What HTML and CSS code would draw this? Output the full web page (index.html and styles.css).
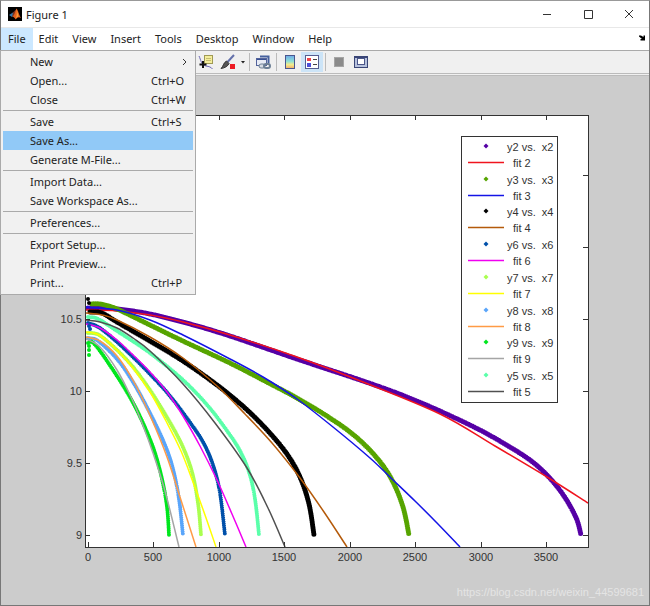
FILE: index.html
```html
<!DOCTYPE html>
<html lang="en">
<head>
<meta charset="utf-8">
<title>Figure 1</title>
<link rel="stylesheet" href="styles.css">
</head>
<body>
<div class="window">
  <header class="titlebar">
    <svg class="logo" viewBox="0 0 14 14" aria-hidden="true">
      <rect width="14" height="14" fill="#000"/>
      <path d="M1 8 L5 5.5 L7 7 L4 10 Z" fill="#2f78b0"/>
      <path d="M5 5.5 L8.5 2 L7.5 8 L4 10 Z" fill="#7d3420"/>
      <path d="M8.5 1.5 C10 3 11 8 13 11 C11 9.500 9.500 10 7.500 12.500 C7 11 6 10 4.500 9.500 C6.500 8.500 7.500 4 8.500 1.500 Z" fill="#e5601d"/>
      <path d="M8.500 2 C9 5 9 8 7.800 12 C9 10 10 9.500 10.500 9.300 Z" fill="#f6a13a"/>
    </svg>
    <h1>Figure 1</h1>
    <div class="controls">
      <button aria-label="Minimize"><svg viewBox="0 0 10 10"><path d="M1 5.500H9"/></svg></button>
      <button aria-label="Maximize"><svg viewBox="0 0 10 10"><path d="M1.500 1.500H9.500V9.500H1.500Z"/></svg></button>
      <button aria-label="Close"><svg viewBox="0 0 10 10"><path d="M1 1L9 9M9 1L1 9"/></svg></button>
    </div>
  </header>
  <nav class="menubar">
    <div class="menu-root">
      <button class="open">File</button>
      <div class="menu">
        <button><span>New</span><svg class="chevron" viewBox="0 0 5 8" aria-hidden="true"><path d="M1 1L4 4L1 7"/></svg></button>
        <button><span>Open...</span><kbd>Ctrl+O</kbd></button>
        <button><span>Close</span><kbd>Ctrl+W</kbd></button>
        <hr>
        <button><span>Save</span><kbd>Ctrl+S</kbd></button>
        <button class="selected"><span>Save As...</span></button>
        <button><span>Generate M-File...</span></button>
        <hr>
        <button><span>Import Data...</span></button>
        <button><span>Save Workspace As...</span></button>
        <hr>
        <button><span>Preferences...</span></button>
        <hr>
        <button><span>Export Setup...</span></button>
        <button><span>Print Preview...</span></button>
        <button><span>Print...</span><kbd>Ctrl+P</kbd></button>
      </div>
    </div>
    <button>Edit</button>
    <button>View</button>
    <button>Insert</button>
    <button>Tools</button>
    <button>Desktop</button>
    <button>Window</button>
    <button>Help</button>
    <button class="dock" aria-label="Dock figure"><svg viewBox="0 0 6 6"><path d="M0 0.500H2L4.500 2V0.500H6V5.500H1.500V4H3L0 1.500Z"/></svg></button>
  </nav>
  <div class="toolbar">
    <button aria-label="Data cursor"><svg viewBox="0 0 16 16">
      <path d="M1 2C3 6 3 11 8 12C11 12.500 13 13 14.500 15" fill="none" stroke="#6b66b5"/>
      <rect x="6.500" y="1.500" width="8" height="8" fill="#f4ee9c" stroke="#a09a55"/>
      <path d="M8 4.500H13M8 6.500H13" stroke="#c5bd70"/>
      <path d="M5 7V14M1.500 10.500H8.500" stroke="#111" stroke-width="2"/>
    </svg></button>
    <button aria-label="Brush"><svg viewBox="0 0 16 16">
      <path d="M14 1L7.500 8" stroke="#6370aa" stroke-width="2"/>
      <path d="M6.500 7L9 9.500C8 12 5 14 1 14.500C3.500 12.500 3 9 6.500 7Z" fill="#555" stroke="#333"/>
      <rect x="10" y="10" width="5" height="5" fill="#ed1c24"/>
    </svg></button>
    <button class="narrow" aria-label="Brush options"><svg viewBox="0 0 8 16"><path d="M2 7H6L4 9.500Z" fill="#222"/></svg></button>
    <i class="sep"></i>
    <button aria-label="Link plot"><svg viewBox="0 0 16 16">
      <path d="M5 2.500H13.500V9.500" fill="none" stroke="#45609d" stroke-width="2"/>
      <rect x="1.500" y="4.500" width="10" height="7" fill="#e7ebf5" stroke="#53639b"/>
      <path d="M2 5.500H11" stroke="#384f91"/>
      <rect x="4" y="10" width="6" height="4" rx="2" fill="#d5dbe3" stroke="#6c7f95"/>
      <rect x="9" y="10" width="6" height="4" rx="2" fill="none" stroke="#6c7f95" stroke-width="2"/>
    </svg></button>
    <i class="sep"></i>
    <button aria-label="Colorbar"><svg viewBox="0 0 16 16">
      <defs><linearGradient id="bar" x2="0" y2="1"><stop stop-color="#6da9e8"/><stop offset=".45" stop-color="#8fe0d5"/><stop offset=".7" stop-color="#f3ec8b"/><stop offset="1" stop-color="#f0ab6c"/></linearGradient></defs>
      <rect x="3.500" y="1.500" width="9" height="13" fill="url(#bar)" stroke="#4a568e"/>
    </svg></button>
    <button class="pressed" aria-label="Legend"><svg viewBox="0 0 16 16">
      <rect x="1.500" y="1.500" width="13" height="13" fill="#fff" stroke="#555e91"/>
      <rect x="3" y="4" width="4" height="3" fill="#f0444a"/><rect x="3" y="9" width="4" height="4" fill="#4c4fd8"/>
      <path d="M9 5.500H13M9 10.500H13" stroke="#444"/>
    </svg></button>
    <i class="sep"></i>
    <button aria-label="Hide plot tools"><svg viewBox="0 0 16 16"><rect x="3.500" y="3.500" width="9" height="9" fill="#8b8b8b" stroke="#a5a5a5"/></svg></button>
    <button aria-label="Show plot tools"><svg viewBox="0 0 16 16">
      <rect x="1.500" y="2.500" width="13" height="11" fill="#b7c2dd" stroke="#3a4677"/>
      <path d="M1 3.500H15" stroke="#3a4677"/><rect x="4.500" y="4.500" width="7" height="6" fill="#fff" stroke="#4b568a"/>
    </svg></button>
  </div>
  <main class="figure">
    <svg id="plot" viewBox="1 76 648 529" role="img" aria-label="Measured data and fitted curves">
      <defs><clipPath id="area"><rect x="85" y="115" width="504" height="433"/></clipPath></defs>
      <rect x="85.500" y="115.500" width="503" height="432" fill="#fff"/>
      <g id="curves" clip-path="url(#area)"></g>
      <g id="axes"></g>
      <g id="legend"></g>
    </svg>
    <p class="watermark">https://blog.csdn.net/weixin_44599681</p>
  </main>
</div>
<script src="plot.js"></script>
</body>
</html>
```
FILE: styles.css
```css
* { box-sizing: border-box; }
body {
  margin: 0;
  font-family: "Noto Sans", "Open Sans", sans-serif;
  font-size: 11px;
  color: #222;
}
button {
  border: 0;
  padding: 0;
  background: none;
  font: inherit;
  color: inherit;
}
svg { display: block; }
.window {
  min-height: 100vh;
  display: flex;
  flex-direction: column;
  border: 1px solid #777;
  border-top-color: #999;
  background: #ccc;
}
.titlebar {
  display: flex;
  align-items: center;
  height: 27px;
  padding-left: 7px;
  background: #fff;
  border-bottom: 1px solid #e8e8e8;
}
.logo { width: 14px; height: 14px; margin-right: 4px; }
h1 { margin: 0; font-size: 11px; font-weight: 400; }
.controls { display: flex; margin-left: auto; }
.controls button {
  width: 41px;
  height: 26px;
  display: grid;
  place-items: center;
}
.controls svg { width: 10px; height: 10px; fill: none; stroke: #333; }
.menubar {
  display: flex;
  height: 23px;
  background: #fff;
  border-bottom: 1px solid #aaa;
}
.menubar > button, .open { height: 22px; padding: 0 7px 2px; }
.menubar > .menu-root + button { padding-left: 6px; }
.open { background: #cce8ff; }
.menu-root { position: relative; }
.menu {
  position: absolute;
  z-index: 2;
  top: 22px;
  left: -1px;
  width: 196px;
  padding: 1px 2px 2px;
  background: #f1f1f1;
  border: 1px solid #aaa;
}
.menu button {
  display: flex;
  align-items: center;
  width: 100%;
  height: 19px;
  padding: 0 6px 0 27px;
}
.menu kbd { width: 36px; margin-left: auto; font: inherit; text-align: left; white-space: nowrap; }
.menu .selected { background: #91c9f7; }
.menu hr { margin: 1px 0; border: 0; border-top: 1px solid #aaa; }
.chevron { width: 5px; height: 8px; margin-left: auto; fill: none; stroke: #333; }
.menubar .dock { margin-left: auto; padding: 0 4px 2px; }
.dock svg { width: 6px; height: 6px; }
.toolbar {
  display: flex;
  align-items: center;
  height: 25px;
  padding: 0 0 1px 194px;
  background: #f0f0f0;
  border-bottom: 3px double #bbb;
}
.toolbar button {
  width: 22px;
  height: 20px;
  display: grid;
  place-items: center;
}
.toolbar svg { width: 16px; height: 16px; }
.toolbar .narrow { width: 8px; }
.toolbar .narrow svg { width: 8px; }
.toolbar .pressed { background: #cce4f7; }
.sep { width: 1px; height: 18px; margin: 0 2px; background: #bbb; }
.figure { position: relative; flex: 1; }
#plot { width: 100%; height: auto; }
#plot text { font: 11px "Liberation Sans", Arial, sans-serif; fill: #333; white-space: pre; }
.end { text-anchor: end; }
.middle { text-anchor: middle; }
.line { fill: none; stroke-width: 1.5px; }
.dots { fill: none; stroke-width: 4px; stroke-linecap: round; stroke-dasharray: 0 2; }
.wide { stroke-width: 5px; }
.rule { fill: none; stroke: #333; }
.watermark {
  position: absolute;
  right: 5px;
  bottom: 6px;
  margin: 0;
  font: 11px/14px "Liberation Sans", Arial, sans-serif;
  color: #e4e4e4;
}
```
FILE: plot.js
```js
const NS = "http://www.w3.org/2000/svg";

function add(parent, tag, attrs, text) {
  const node = document.createElementNS(NS, tag);
  for (const key in attrs) node.setAttribute(key, attrs[key]);
  if (text) node.textContent = text;
  document.getElementById(parent).appendChild(node);
}

// Smooth curve through the listed x, y pairs (Catmull-Rom spline).
function smooth(list) {
  const p = [];
  for (let i = 0; i < list.length; i += 2) p.push([list[i], list[i + 1]]);
  let d = "M" + p[0];
  for (let i = 0; i < p.length - 1; i++) {
    const a = p[i - 1] || p[i], b = p[i], c = p[i + 1], e = p[i + 2] || c;
    d += "C" + [b[0] + (c[0] - a[0]) / 6, b[1] + (c[1] - a[1]) / 6,
      c[0] - (e[0] - b[0]) / 6, c[1] - (e[1] - b[1]) / 6, c[0], c[1]];
  }
  return d;
}

const series = [
  { n: 2, data: "#5500a5", fit: "#f0141e", wide: true,
    points: [88,308,117,309,150,314,190,324,230,336,297,359,363,381,402,395,440,411,480,430,510,447,530,460,546,474,559,489,569,504,577,520,581,535],
    curve: [86,310,117,311,150,315,183,322,230,335,297,357,363,382,440,414,495,446,547,477,588,503] },
  { n: 3, data: "#56a400", fit: "#1414e6", wide: true,
    points: [92,304,100,304,117,309,150,325,183,341,230,363,263,380,297,398,330,418,355,436,377,458,392,480,403,507,409,535],
    curve: [86,307,117,310,150,320,183,335,230,359,263,377,297,399,333,427,370,458,392,479,415,501,437,523,460,547] },
  { n: 4, data: "#000000", fit: "#b45a0a", wide: true,
    points: [90,312,102,313,117,322,150,341,183,361,217,385,245,408,268,431,287,454,300,477,309,504,314,535],
    curve: [86,313,102,315,117,320,150,337,183,358,217,386,245,414,272,443,300,478,324,512,347,547] },
  { n: 6, data: "#0050aa", fit: "#f000f0",
    points: [88,323,100,328,117,342,133,357,150,374,170,396,189,421,203,442,213,465,220,493,225,535],
    curve: [86,324,100,328,117,340,133,355,150,372,167,392,183,416,200,446,217,480,232,514,246,547] },
  { n: 7, data: "#aaff50", fit: "#ffff00",
    points: [88,333,99,335,117,350,133,367,150,390,168,419,182,445,192,472,198,503,201,535],
    curve: [86,332,99,335,117,350,133,368,150,392,166,421,181,451,193,482,205,515,216,547] },
  { n: 8, data: "#5aa5fa", fit: "#ff9b46",
    points: [88,338,98,341,117,359,133,382,151,415,165,445,173,469,179,499,183,535],
    curve: [86,337,100,341,117,356,134,382,152,420,167,457,180,497,196,547] },
  { n: 9, data: "#00e61e", fit: "#a5a5a5",
    points: [88,343,92,342,100,351,117,376,131,399,143,423,154,450,162,479,167,507,169,535],
    curve: [86,339,100,347,117,370,131,397,142,423,153,453,165,491,179,547] },
  { n: 5, data: "#5affaa", fit: "#505050",
    points: [88,317,98,319,117,331,150,353,183,380,208,406,225,428,239,449,249,472,255,499,259,535],
    curve: [86,320,100,322,117,328,133,338,150,351,183,384,215,423,247,468,268,508,285,547] }
];

for (const s of series) {
  add("curves", "path", { class: s.wide ? "dots wide" : "dots", stroke: s.data, d: smooth(s.points) });
  add("curves", "path", { class: "line", stroke: s.fit, d: smooth(s.curve) });
}
// Stray samples near the origin.
for (const [x, y, color] of [[88,299,"#000"],[89,303,"#000"],[89,326,"#0050aa"],[90,329,"#0050aa"],
  [89,346,"#00e61e"],[89,350,"#00e61e"],[89,355,"#00e61e"]]) {
  add("curves", "circle", { cx: x, cy: y, r: 2, fill: color });
}

add("axes", "rect", { class: "rule", x: 85.5, y: 115.5, width: 503, height: 432 });
[88, 153, 219, 284, 350, 415, 481, 546].forEach((x, i) => {
  add("axes", "path", { class: "rule", d: `M${x + 0.5} 547v-5M${x + 0.5} 115v5` });
  add("axes", "text", { class: "middle", x: x, y: 561 }, String(i * 500));
});
const labels = ["9", "9.5", "10", "10.5"];
[535, 463, 391, 319, 247, 175].forEach((y, i) => {
  add("axes", "path", { class: "rule", d: `M85 ${y + 0.5}h5M588 ${y + 0.5}h-5` });
  if (labels[i]) add("axes", "text", { class: "end", x: 82, y: y + 4 }, labels[i]);
});

add("legend", "rect", { x: 461.5, y: 136.5, width: 96, height: 266, fill: "#fff", stroke: "#333" });
series.forEach((s, i) => {
  const y = Math.round(146 + i * 32.7);
  add("legend", "path", { fill: s.data, d: `M486 ${y - 2.5}l2.5 2.5l-2.5 2.5l-2.5 -2.5z` });
  add("legend", "text", { x: 507, y: y + 5 }, `y${s.n} vs.  x${s.n}`);
  add("legend", "path", { class: "line", stroke: s.fit, d: `M468 ${y + 16.5}h36` });
  add("legend", "text", { x: 513, y: y + 21 }, `fit ${s.n}`);
});
```
